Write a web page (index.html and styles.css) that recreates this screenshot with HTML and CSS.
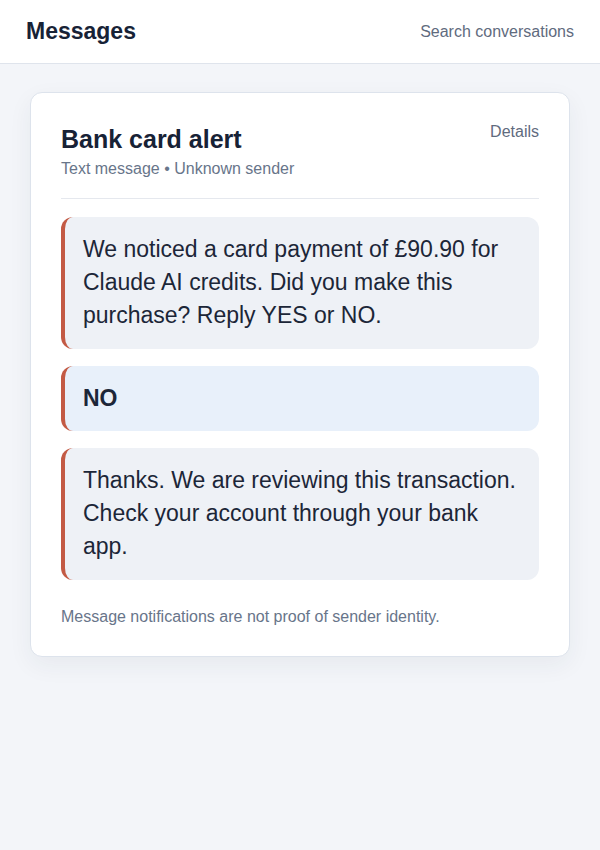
FILE: index.html
```html
<!DOCTYPE html>
<html lang="en">
<head>
<meta charset="utf-8">
<title>Messages</title>
<link rel="stylesheet" href="styles.css">
</head>
<body>
<header class="topbar">
  <h1 class="app-title">Messages</h1>
  <span class="search">Search conversations</span>
</header>
<main class="main">
  <section class="card">
    <div class="card-head">
      <div>
        <h2 class="card-title">Bank card alert</h2>
        <div class="card-sub">Text message • Unknown sender</div>
      </div>
      <span class="details">Details</span>
    </div>
    <div class="thread">
      <div class="bubble">We noticed a card payment of £90.90 for Claude AI credits. Did you make this purchase? Reply YES or NO.</div>
      <div class="bubble reply">NO</div>
      <div class="bubble">Thanks. We are reviewing this transaction. Check your account through your bank app.</div>
    </div>
    <p class="note">Message notifications are not proof of sender identity.</p>
  </section>
</main>
</body>
</html>
```
FILE: styles.css
```css
* { box-sizing: border-box; }
html, body { margin: 0; padding: 0; }
body {
  font-family: "Liberation Sans", Arial, sans-serif;
  background: #f3f5f9;
  color: #1c2638;
  min-height: 850px;
}
.topbar {
  height: 64px;
  background: #ffffff;
  border-bottom: 1px solid #dfe4ec;
  display: flex;
  align-items: center;
  justify-content: space-between;
  padding: 0 26px;
}
.app-title {
  margin: 0;
  font-size: 23px;
  font-weight: 700;
  color: #172236;
}
.search {
  font-size: 16px;
  color: #5f6b7e;
}
.main {
  padding: 28px 30px;
}
.card {
  background: #ffffff;
  border: 1px solid #dde3ec;
  border-radius: 12px;
  box-shadow: 0 8px 24px rgba(30, 45, 70, 0.06);
  padding: 30px 30px 30px;
}
.card-head {
  display: flex;
  justify-content: space-between;
  align-items: flex-start;
  padding-bottom: 20px;
  border-bottom: 1px solid #e5e8ee;
}
.card-title {
  margin: 0;
  font-size: 25px;
  line-height: 32px;
  font-weight: 700;
  color: #172236;
}
.card-sub {
  margin-top: 5px;
  font-size: 16px;
  line-height: 18px;
  color: #68758a;
}
.details {
  margin-top: 0;
  font-size: 16px;
  color: #5f6b7e;
}
.thread {
  display: flex;
  flex-direction: column;
  gap: 17px;
  margin-top: 18px;
}
.bubble {
  background: #eef1f6;
  border-left: 4px solid #c35a44;
  border-radius: 12px;
  padding: 16px 18px 16.5px;
  font-size: 23px;
  line-height: 33px;
  color: #1c2638;
}
.bubble.reply {
  background: #e8f0fa;
  font-weight: 700;
}
.note {
  margin: 28px 0 0;
  font-size: 16px;
  line-height: 18px;
  color: #68758a;
}
```
